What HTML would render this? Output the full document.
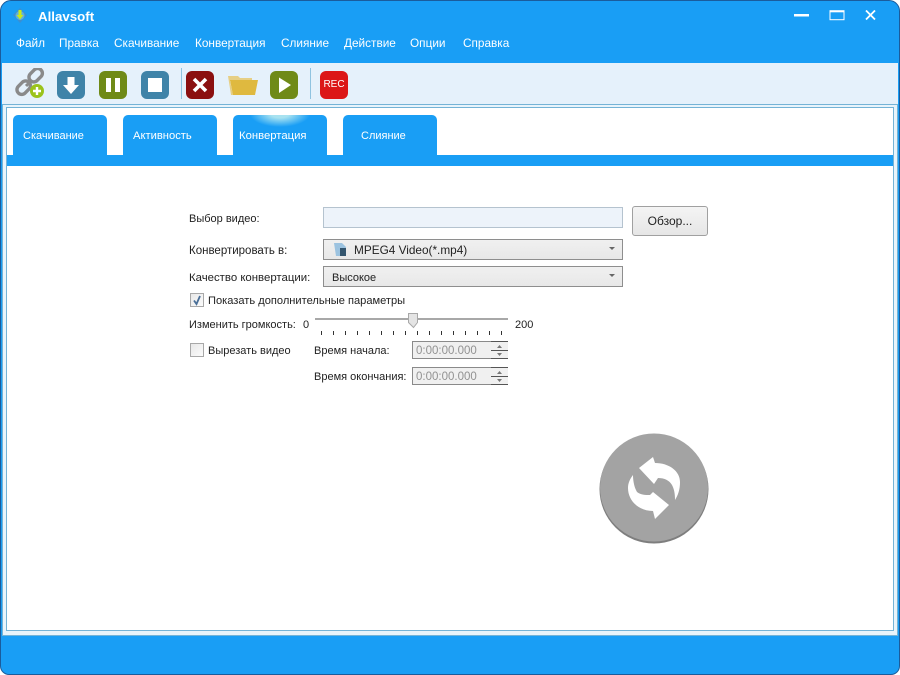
<!DOCTYPE html>
<html lang="ru"><head><meta charset="utf-8"><title>Allavsoft</title>
<style>
html,body{margin:0;padding:0;background:#fff}
#w{position:relative;width:900px;height:675px;overflow:hidden;background:#fff;font-family:"Liberation Sans",sans-serif;font-size:11px;color:#222}
#w div,#w span.a{position:absolute;white-space:nowrap;box-sizing:border-box}
#frame{left:0;top:0;width:900px;height:675px;background:#199ef5;border:1.5px solid #1a5c9c;border-radius:11px 11px 9px 9px}
#tb{left:2px;top:63px;width:896px;height:41px;background:#e5f1fb}
#outer{left:2px;top:104px;width:896px;height:532px;background:#e8f4fb;border:1px solid #74b3d6}
#inner{left:6px;top:107px;width:888px;height:524px;background:#fff;border:1px solid #74b3d6}
.m{top:36px;color:#fff;font-size:11.800px;line-height:14px}
.ic{top:71px;width:28px;height:28px;border-radius:6px}
.tab{top:115px;width:94px;height:41px;background:#199ef5;border-radius:5px 5px 0 0;color:#fff;font-size:11px;line-height:14px}
.tab span{position:absolute;top:14px}
.l{line-height:14px;font-size:11px;color:#222}
.box{border:1px solid #8e8e8e;background:linear-gradient(#f0f0f0,#e8e8e8)}
.arr{width:0;height:0;border-left:3.500px solid transparent;border-right:3.500px solid transparent;border-top:3.500px solid #666}
.cb{width:14px;height:14px;border:1px solid #a8a8a8;background:linear-gradient(135deg,#e8e8e8,#fbfbfb)}
.time{left:412px;width:96px;height:18px;border:1px solid #8a8a8a;background:#f0f0f0;color:#929292;font-size:11.500px;line-height:19px;padding-left:3px}
.sp{right:-1px;top:-1px;width:17px;height:18px;background:#f0f0f0}
.sep{top:68px;width:1px;height:31px;background:#8fc3e0}
</style></head><body>
<div id="w">
<div id="frame"></div>
<div id="tb"></div>
<div id="outer"></div>
<div id="inner"></div>

<svg style="position:absolute;left:12px;top:8px" width="16" height="16" viewBox="0 0 16 16"><path d="M8 0 L15 7 L8 15 L1 7Z" fill="#3d8fd0"/><circle cx="8" cy="7.500" r="4.500" fill="#5fb0dc"/><path d="M6.500 2h3v5h2L8 11.500 4.500 7h2z" fill="#c8e81e"/></svg>
<div style="left:38px;top:9px;color:#fff;font-weight:bold;font-size:13.300px;line-height:15px">Allavsoft</div>
<div class="m" style="left:16px">Файл</div>
<div class="m" style="left:59px">Правка</div>
<div class="m" style="left:114px">Скачивание</div>
<div class="m" style="left:195px">Конвертация</div>
<div class="m" style="left:281px">Слияние</div>
<div class="m" style="left:344px">Действие</div>
<div class="m" style="left:410px">Опции</div>
<div class="m" style="left:463px">Справка</div>

<svg style="position:absolute;left:794px;top:10px" width="90" height="14" viewBox="0 0 90 14"><rect x="0" y="4" width="15" height="2.500" fill="#fff"/><rect x="36" y=".7" width="14" height="9" fill="none" stroke="#fff" stroke-width="1"/><rect x="36" y=".5" width="14" height="1.800" fill="#fff"/><path d="M72 .5 L81 9.500M81 .5 L72 9.500" stroke="#fff" stroke-width="1.800" fill="none"/></svg>

<svg style="position:absolute;left:14px;top:68px" width="32" height="32" viewBox="0 0 32 32"><g fill="none" stroke="#8a8a8a" stroke-width="3.400"><rect x="14" y="2.500" width="15" height="9.500" rx="4.700" transform="rotate(-45 21.500 7)"/><rect x="2" y="15" width="15" height="9.500" rx="4.700" transform="rotate(-45 9.500 19.500)"/></g><path d="M12 18 L18 12" stroke="#8a8a8a" stroke-width="3"/><circle cx="23" cy="23" r="7" fill="#9bc31c"/><path d="M23 19v8M19 23h8" stroke="#fff" stroke-width="2.400"/></svg>

<div class="ic" style="left:57px;background:#3f83a8"></div>
<svg style="position:absolute;left:57px;top:71px" width="28" height="28"><path d="M10.500 6h7v8h4.500L14 23 6 14h4.500z" fill="#fff"/></svg>
<div class="ic" style="left:99px;background:#6f8a17"></div>
<svg style="position:absolute;left:99px;top:71px" width="28" height="28"><rect x="7" y="7" width="5" height="14" fill="#fff"/><rect x="16" y="7" width="5" height="14" fill="#fff"/></svg>
<div class="ic" style="left:141px;background:#3f83a8"></div>
<svg style="position:absolute;left:141px;top:71px" width="28" height="28"><rect x="7" y="7" width="14" height="14" fill="#fff"/></svg>
<div class="sep" style="left:181px"></div>
<div class="ic" style="left:186px;background:#8b1010"></div>
<svg style="position:absolute;left:186px;top:71px" width="28" height="28"><path d="M8 8 L20 20M20 8 L8 20" stroke="#fff" stroke-width="3.600"/></svg>
<svg style="position:absolute;left:228px;top:75px" width="30" height="21" viewBox="0 0 30 21"><path d="M0 1h10l2 2h12v3H2l3 14H3z" fill="#e6cf85"/><path d="M2 5h28l-3 15H5z" fill="#dfb93f"/></svg>
<div class="ic" style="left:270px;background:#6f8a17"></div>
<svg style="position:absolute;left:270px;top:71px" width="28" height="28"><path d="M9 6.500 L21 14 9 22z" fill="#fff"/></svg>
<div class="sep" style="left:310px"></div>
<div class="ic" style="left:320px;background:#dc1717;color:#fff;font-size:10px;line-height:27px;text-align:center">REC</div>

<div class="tab" style="left:13px"><span style="left:10px">Скачивание</span></div>
<div class="tab" style="left:123px"><span style="left:10px;font-size:11.200px">Активность</span></div>
<div class="tab" style="left:233px;overflow:hidden"><div style="left:17px;top:-14px;width:60px;height:26px;border-radius:50%;background:radial-gradient(closest-side,#a8e2f0 30%,rgba(168,226,240,0))"></div><span style="left:6px;font-size:11.300px">Конвертация</span></div>
<div class="tab" style="left:343px"><span style="left:18px">Слияние</span></div>
<div style="left:7px;top:155px;width:886px;height:11px;background:#199ef5"></div>

<div class="l" style="left:189px;top:212px">Выбор видео:</div>
<div style="left:323px;top:207px;width:300px;height:21px;background:#edf3fa;border:1px solid #b5c3cf"></div>
<div style="left:632px;top:206px;width:76px;height:30px;border:1px solid #a0a0a0;border-radius:3px;background:linear-gradient(#f4f4f4,#e6e6e6);text-align:center;line-height:28px;font-size:12px;color:#222">Обзор...</div>

<div class="l" style="left:189px;top:244px;font-size:11.500px">Конвертировать в:</div>
<div class="box" style="left:323px;top:239px;width:300px;height:21px"></div>
<svg style="position:absolute;left:333px;top:243px" width="14" height="13"><path d="M1 0h8l4 4v9H3z" fill="#9cc3e0"/><rect x="7" y="5" width="6" height="8" fill="#33556e"/></svg>
<div class="l" style="left:354px;top:243px;font-size:11.800px">MPEG4 Video(*.mp4)</div>
<div class="arr" style="left:609px;top:247px"></div>

<div class="l" style="left:189px;top:271px;font-size:11.400px">Качество конвертации:</div>
<div class="box" style="left:323px;top:266px;width:300px;height:21px"></div>
<div class="l" style="left:332px;top:271px">Высокое</div>
<div class="arr" style="left:609px;top:274px"></div>

<div class="cb" style="left:190px;top:293px"></div>
<svg style="position:absolute;left:190px;top:293px" width="14" height="14"><path d="M4 7.500 L6.500 11 L10 3" stroke="#4a6f98" stroke-width="1.800" fill="none"/></svg>
<div class="l" style="left:208px;top:294px;font-size:11.100px">Показать дополнительные параметры</div>

<div class="l" style="left:189px;top:318px">Изменить громкость:</div>
<div class="l" style="left:303px;top:318px">0</div>
<div style="left:315px;top:318px;width:193px;height:2px;background:#a8a8a8"></div>
<svg style="position:absolute;left:315px;top:312px" width="195" height="24"><path d="M93.500 1.500h9v9l-4 5-5-5z" fill="#e4e4e4" stroke="#a8a8a8"/><path d="M6.500 19v4M18.500 19v4M30.500 19v4M42.500 19v4M54.500 19v4M66.500 19v4M78.500 19v4M90.500 19v4M102.500 19v4M114.500 19v4M126.500 19v4M138.500 19v4M150.500 19v4M162.500 19v4M174.500 19v4M186.500 19v4" stroke="#333" stroke-width="1"/></svg>
<div class="l" style="left:515px;top:318px">200</div>

<div class="cb" style="left:190px;top:343px"></div>
<div class="l" style="left:208px;top:344px">Вырезать видео</div>
<div class="l" style="left:314px;top:344px">Время начала:</div>
<div class="time" style="top:341px">0:00:00.000<div class="sp"><svg width="17" height="18" style="display:block"><path d="M0 .5h17M0 9.500h17M0 17.500h17" stroke="#555"/><path d="M6 7l2.500-3L11 7zM6 12h5l-2.500 3z" fill="#777"/></svg></div></div>
<div class="l" style="left:314px;top:370px">Время окончания:</div>
<div class="time" style="top:367px">0:00:00.000<div class="sp"><svg width="17" height="18" style="display:block"><path d="M0 .5h17M0 9.500h17M0 17.500h17" stroke="#555"/><path d="M6 7l2.500-3L11 7zM6 12h5l-2.500 3z" fill="#777"/></svg></div></div>

<svg style="position:absolute;left:598px;top:433px" width="112" height="112" viewBox="0 0 112 112"><circle cx="56" cy="56" r="54.500" fill="#7e7e7e"/><circle cx="56" cy="54.500" r="54" fill="#a3a3a3"/>
<path d="M41 35 L55 24 L57 30 C71 30 82 38 82 49 C82 57 80 62 77 67 C77 60 76 56 74 52 C71 47 66 45 60 45 L56 51 Z" fill="#fff"/>
<path d="M71 72 L57 86 L55 78 C41 78 30 68 30 55 C30 50 32 46 35 42 C35 47 36 54 39 59 C43 62 47 62 52 62 L55 59 Z" fill="#fff"/></svg>
</div>
</body></html>
